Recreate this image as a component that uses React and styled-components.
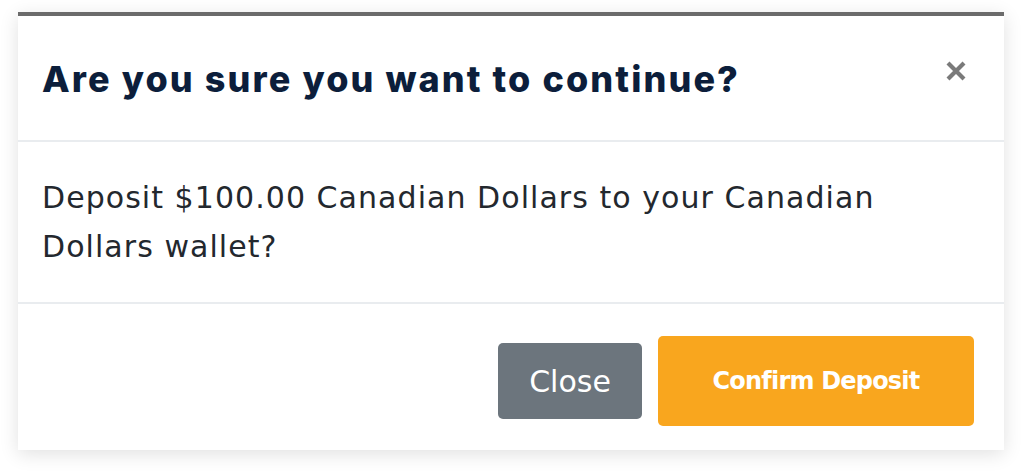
import React from 'react'
import styled, { createGlobalStyle } from 'styled-components'

const Global = createGlobalStyle`
  html, body {
    margin: 0;
    padding: 0;
    background: #fff;
    font-family: 'DejaVu Sans', 'Liberation Sans', sans-serif;
  }
`

const App = () => {
  return (
    <>
      <Global />
      <Page>
        <Modal>
          <Header>
            <Title>Are you sure you want to continue?</Title>
            <CloseIcon aria-label="Close">
              <svg width="24" height="24" viewBox="0 0 24 24">
                <path d="M4 4 L20 20 M20 4 L4 20" stroke="#7a7a7a" strokeWidth="4.2" strokeLinecap="butt" />
              </svg>
            </CloseIcon>
          </Header>
          <Body>
            Deposit $100.00 Canadian Dollars to your Canadian Dollars wallet?
          </Body>
          <Footer>
            <Button variant="secondary">Close</Button>
            <Button variant="primary">Confirm Deposit</Button>
          </Footer>
        </Modal>
      </Page>
    </>
  )
}

const Page = styled.div`
  padding: 12px 18px 24px;
`

const Modal = styled.div`
  width: 986px;
  background: #fff;
  border-top: 4px solid #6b6b6b;
  box-shadow: 0 4px 18px rgba(0, 0, 0, 0.12);
`

const Header = styled.div`
  height: 126px;
  box-sizing: border-box;
  display: flex;
  align-items: center;
  justify-content: space-between;
  padding: 0 36px 0 24px;
  border-bottom: 2px solid #e9ecef;
`

const Title = styled.h2`
  margin: 0;
  padding-top: 2px;
  font-family: 'Inter', sans-serif;
  font-weight: 800;
  font-size: 36px;
  color: #0c1e3b;
  letter-spacing: 2.1px;
`

const CloseIcon = styled.span`
  display: flex;
  margin-top: -14px;
`

const Body = styled.div`
  height: 162px;
  box-sizing: border-box;
  padding: 31px 110px 0 24px;
  font-family: 'DejaVu Sans', sans-serif;
  font-size: 30px;
  line-height: 49px;
  letter-spacing: 1.05px;
  color: #23282e;
  border-bottom: 2px solid #e9ecef;
`

const Footer = styled.div`
  height: 146px;
  box-sizing: border-box;
  display: flex;
  justify-content: flex-end;
  align-items: center;
  gap: 16px;
  padding: 8px 30px 0 0;
`

const Button = styled.button`
  border: none;
  border-radius: 5px;
  color: #fff;
  font-family: 'DejaVu Sans', sans-serif;
  cursor: pointer;
  background: ${(p) => (p.variant === 'primary' ? '#f9a61e' : '#6c757d')};
  width: ${(p) => (p.variant === 'primary' ? '316px' : '144px')};
  height: ${(p) => (p.variant === 'primary' ? '90px' : '76px')};
  font-size: ${(p) => (p.variant === 'primary' ? '24px' : '30px')};
  font-weight: ${(p) => (p.variant === 'primary' ? 700 : 400)};
  letter-spacing: ${(p) => (p.variant === 'primary' ? '-0.8px' : '0')};
`

export default App
